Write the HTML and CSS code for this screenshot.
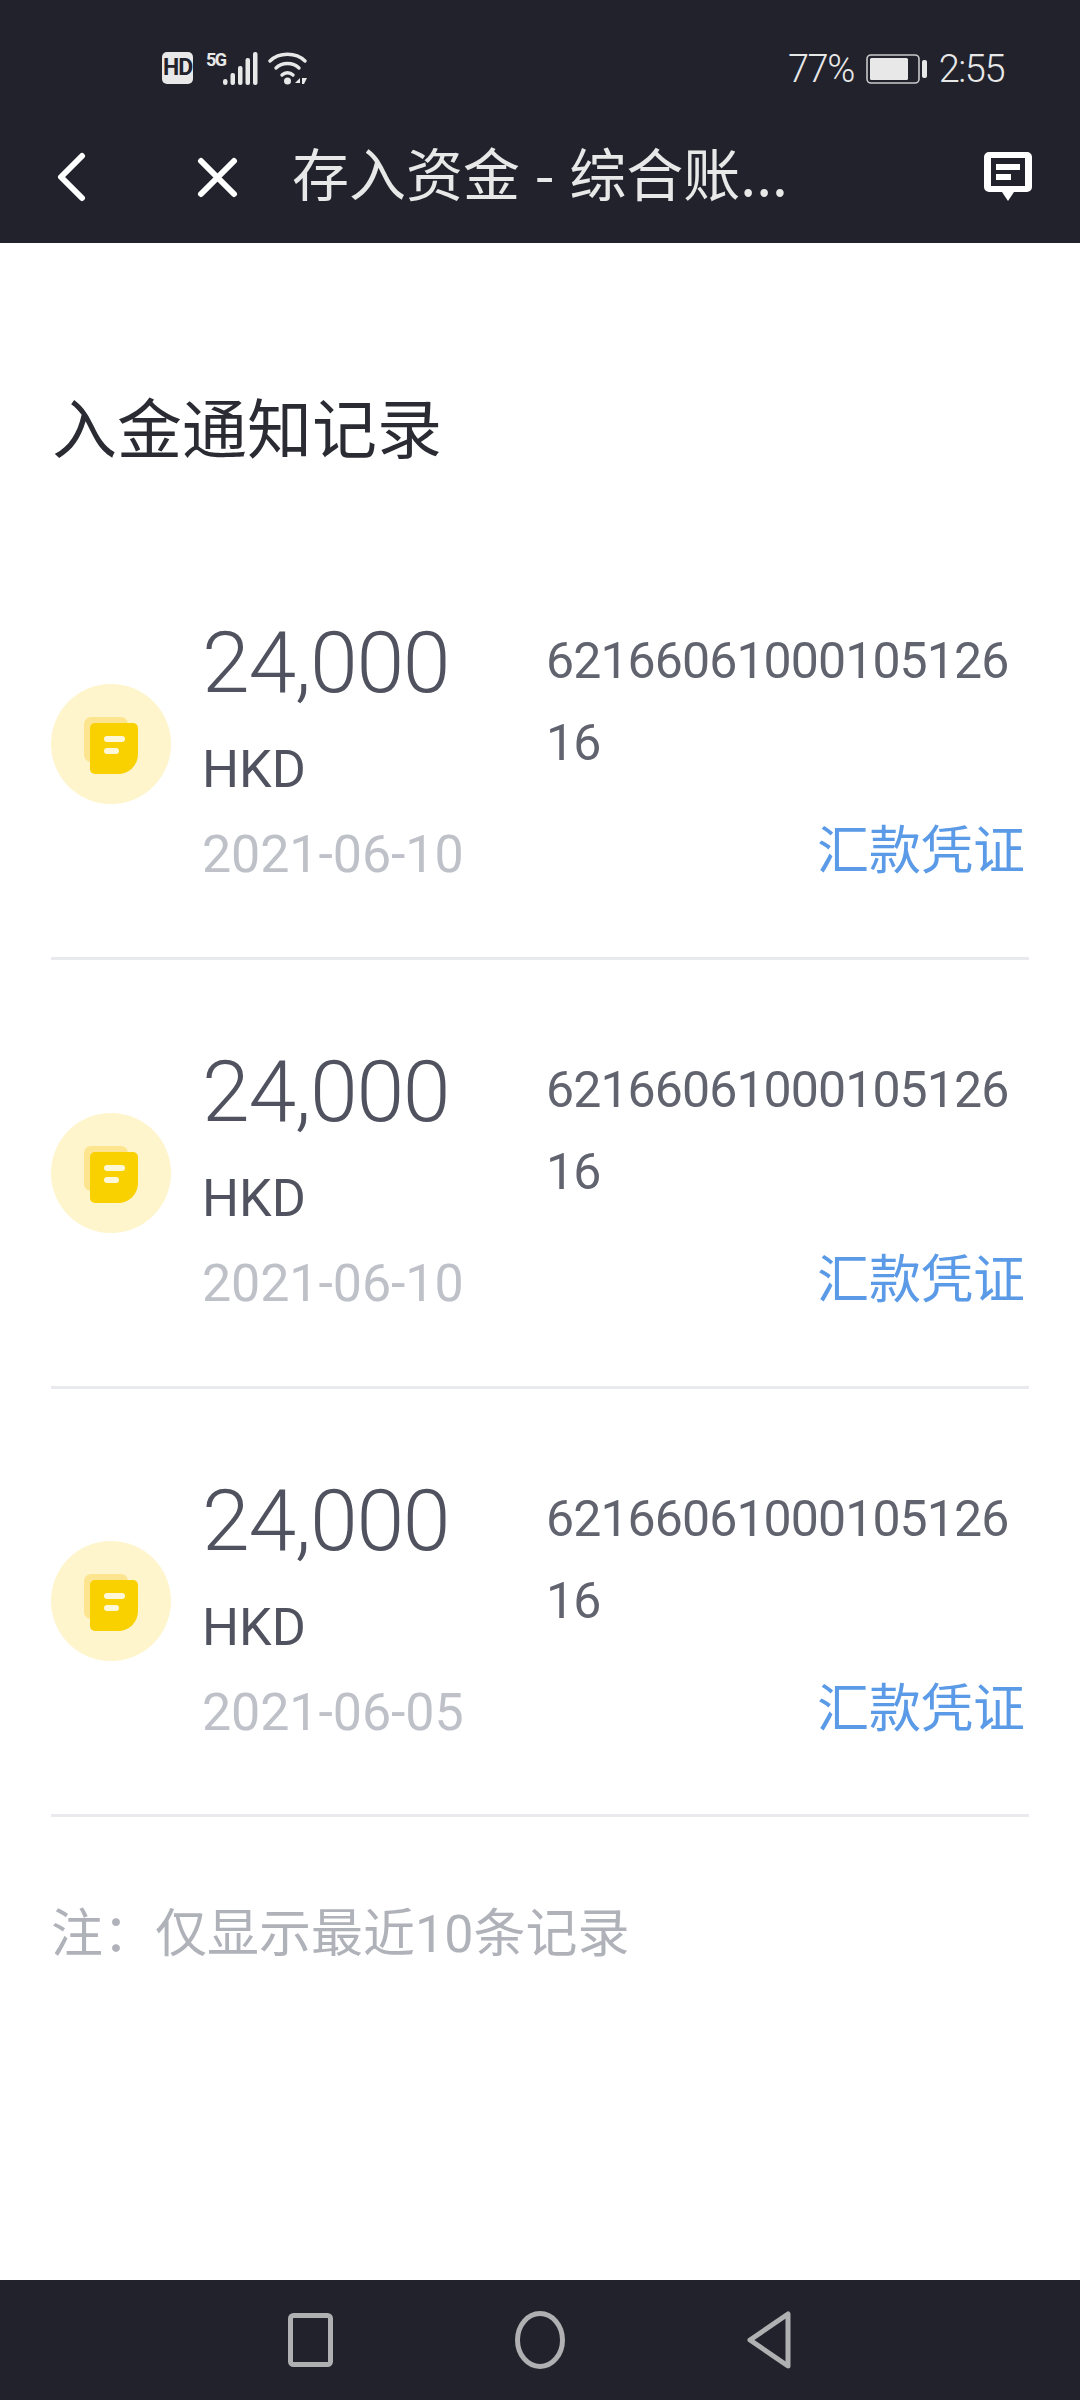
FILE: index.html
```html
<!DOCTYPE html>
<html lang="zh-CN">
<head>
    <meta charset="UTF-8">
    <meta name="viewport" content="width=device-width, initial-scale=1.0">
    <title>入金通知记录</title>
    <link rel="stylesheet" href="styles.css">
</head>
<body>
    <div class="page">
        <header class="top">
            <div class="status-bar">
                <div class="status-left">
                    <span class="hd">HD</span>
                    <span class="five-g">5G</span>
                    <svg class="signal" width="35" height="33" viewBox="0 0 35 33" fill="#e8e8e8">
                        <rect x="0" y="27" width="4.500" height="6" rx="2.250"/>
                        <rect x="7.500" y="21" width="4.500" height="12" rx="2"/>
                        <rect x="15" y="14" width="4.500" height="19" rx="2"/>
                        <rect x="22.500" y="6" width="4.500" height="27" rx="2"/>
                        <rect x="30" y="0" width="4.500" height="33" rx="2"/>
                    </svg>
                    <svg class="wifi" width="39" height="33" viewBox="0 0 39 33" fill="none" stroke="#e8e8e8" stroke-width="3.400" stroke-linecap="round">
                        <path d="M2 9C11 0 28 0 37 9"/>
                        <path d="M8 16C14 10 25 10 31 16"/>
                        <path d="M14 23C17 20 22 20 25 23"/>
                        <circle cx="19.500" cy="29" r="3.500" fill="#e8e8e8" stroke="none"/>
                        <path d="M32 26L27 31H32Z" fill="#e8e8e8" stroke="none"/>
                        <path d="M34 26H39L36 32H34Z" fill="#e8e8e8" stroke="none"/>
                    </svg>
                </div>
                <div class="status-right">
                    <span>77%</span>
                    <svg class="battery" width="61" height="30" viewBox="0 0 61 30">
                        <rect x="1" y="1" width="52" height="28" rx="4" fill="none" stroke="#c9c9cb" stroke-width="1.600"/>
                        <rect x="4" y="4" width="38" height="22" rx="1.500" fill="#e8e8e8"/>
                        <rect x="56" y="6" width="5" height="18" rx="2" fill="#e8e8e8"/>
                    </svg>
                    <span>2:55</span>
                </div>
            </div>
            <nav class="nav-bar">
                <svg class="back" width="30" height="50" viewBox="0 0 30 50" fill="none" stroke="#fff" stroke-width="6" stroke-linecap="round" stroke-linejoin="round">
                    <path d="M25 4L4 25L25 46"/>
                </svg>
                <svg class="close" width="42" height="42" viewBox="0 0 42 42" fill="none" stroke="#fff" stroke-width="6" stroke-linecap="round">
                    <path d="M4 5L37 38M37 5L4 38"/>
                </svg>
                <div class="nav-title">存入资金 - 综合账...</div>
                <svg class="comment" width="48" height="50" viewBox="0 0 48 50">
                    <path fill="#fff" fill-rule="evenodd" d="M5 0H43A5 5 0 0 1 48 5V35A5 5 0 0 1 43 40H30L24 49L18 40H5A5 5 0 0 1 0 35V5A5 5 0 0 1 5 0ZM7 6V34H41V6ZM12 12H36V18H12ZM12 22H27V28H12Z"/>
                </svg>
            </nav>
        </header>

        <main class="content">
            <h1 class="heading">入金通知记录</h1>

            <div class="record">
                <div class="record-icon">
                    <svg width="54" height="57" viewBox="0 0 54 57">
                        <rect x="0" y="0" width="44" height="45" rx="7" fill="#fde590"/>
                        <path fill="#f9d000" d="M11 6H49A5 5 0 0 1 54 11V37A20 20 0 0 1 34 57H11A5 5 0 0 1 6 52V11A5 5 0 0 1 11 6Z"/>
                        <rect x="20" y="19" width="21" height="6" rx="3" fill="#fff8d8"/>
                        <rect x="20" y="31" width="15" height="6" rx="3" fill="#fff8d8"/>
                    </svg>
                </div>
                <div class="record-main">
                    <div class="amount">24,000</div>
                    <div class="currency">HKD</div>
                    <div class="date">2021-06-10</div>
                </div>
                <div class="record-side">
                    <div class="account">6216606100010512616</div>
                    <a class="voucher">汇款凭证</a>
                </div>
            </div>

            <div class="record">
                <div class="record-icon">
                    <svg width="54" height="57" viewBox="0 0 54 57">
                        <rect x="0" y="0" width="44" height="45" rx="7" fill="#fde590"/>
                        <path fill="#f9d000" d="M11 6H49A5 5 0 0 1 54 11V37A20 20 0 0 1 34 57H11A5 5 0 0 1 6 52V11A5 5 0 0 1 11 6Z"/>
                        <rect x="20" y="19" width="21" height="6" rx="3" fill="#fff8d8"/>
                        <rect x="20" y="31" width="15" height="6" rx="3" fill="#fff8d8"/>
                    </svg>
                </div>
                <div class="record-main">
                    <div class="amount">24,000</div>
                    <div class="currency">HKD</div>
                    <div class="date">2021-06-10</div>
                </div>
                <div class="record-side">
                    <div class="account">6216606100010512616</div>
                    <a class="voucher">汇款凭证</a>
                </div>
            </div>

            <div class="record">
                <div class="record-icon">
                    <svg width="54" height="57" viewBox="0 0 54 57">
                        <rect x="0" y="0" width="44" height="45" rx="7" fill="#fde590"/>
                        <path fill="#f9d000" d="M11 6H49A5 5 0 0 1 54 11V37A20 20 0 0 1 34 57H11A5 5 0 0 1 6 52V11A5 5 0 0 1 11 6Z"/>
                        <rect x="20" y="19" width="21" height="6" rx="3" fill="#fff8d8"/>
                        <rect x="20" y="31" width="15" height="6" rx="3" fill="#fff8d8"/>
                    </svg>
                </div>
                <div class="record-main">
                    <div class="amount">24,000</div>
                    <div class="currency">HKD</div>
                    <div class="date">2021-06-05</div>
                </div>
                <div class="record-side">
                    <div class="account">6216606100010512616</div>
                    <a class="voucher">汇款凭证</a>
                </div>
            </div>

            <p class="note">注：仅显示最近10条记录</p>
        </main>

        <footer class="system-bar">
            <svg width="45" height="54" viewBox="0 0 45 54" fill="none" stroke="#b0b0b2" stroke-width="5">
                <rect x="2.500" y="2.500" width="40" height="49" rx="3"/>
            </svg>
            <svg width="50" height="58" viewBox="0 0 50 58" fill="none" stroke="#b0b0b2" stroke-width="5">
                <ellipse cx="25" cy="29" rx="22.500" ry="26.500"/>
            </svg>
            <svg width="44" height="58" viewBox="0 0 44 58" fill="none" stroke="#b0b0b2" stroke-width="5" stroke-linejoin="round">
                <path d="M41 3V55L3 29Z"/>
            </svg>
        </footer>
    </div>
</body>
</html>
```

FILE: styles.css
```css
* {
    box-sizing: border-box;
}

body {
    margin: 0;
    font-family: Roboto, "Noto Sans CJK SC", sans-serif;
    background-color: #fff;
}

.page {
    display: flex;
    flex-direction: column;
    width: 1080px;
    height: 2400px;
    overflow: hidden;
}

.top {
    height: 243px;
    background-color: #21222c;
    color: #e8e8e8;
}

.status-bar {
    display: flex;
    justify-content: space-between;
    align-items: center;
    height: 68px;
    margin-top: 34px;
    padding: 0 76px 0 162px;
}

.status-left {
    display: flex;
    align-items: center;
}

.hd {
    width: 31px;
    height: 32px;
    border-radius: 5px;
    background-color: #e8e8e8;
    color: #21222c;
    font-size: 23px;
    font-weight: 700;
    line-height: 32px;
    text-align: center;
    letter-spacing: -1px;
}

.five-g {
    align-self: flex-start;
    width: 17px;
    margin-left: 13px;
    font-size: 18px;
    font-weight: 700;
    line-height: 15px;
    letter-spacing: -1.500px;
    white-space: nowrap;
}

.wifi {
    margin-left: 10px;
}

.status-right {
    display: flex;
    align-items: center;
    gap: 12px;
    padding-top: 2px;
    font-size: 38px;
    font-weight: 300;
    letter-spacing: -1.500px;
}

.nav-bar {
    display: flex;
    align-items: center;
    height: 141px;
    padding: 8px 48px 0 57px;
}

.close {
    margin-left: 110px;
}

.nav-title {
    flex: 1;
    margin: 0 0 12px 53px;
    font-family: "Noto Sans CJK SC", sans-serif;
    font-size: 57px;
    line-height: 70px;
    word-spacing: 2px;
    white-space: nowrap;
}

.content {
    flex: 1;
    padding: 0 51px;
}

.heading {
    margin: 0;
    padding: 142px 0 66px 1px;
    font-family: "Noto Sans CJK SC", sans-serif;
    font-size: 65px;
    font-weight: 400;
    line-height: 80px;
    color: #2a2b33;
}

.record {
    display: flex;
    align-items: flex-start;
    height: 428.800px;
    border-bottom: 3px solid #e9eaee;
}

.record-icon {
    display: flex;
    justify-content: center;
    align-items: center;
    align-self: center;
    flex-shrink: 0;
    width: 120px;
    height: 120px;
    margin-right: 32px;
    padding-top: 3px;
    border-radius: 50%;
    background-color: #fef5cc;
}

.record-main {
    width: 344px;
    margin-left: -1px;
    padding-top: 80px;
}

.amount {
    font-size: 86px;
    font-weight: 300;
    line-height: 104px;
    letter-spacing: -1.300px;
    color: #50535f;
}

.currency {
    margin-top: 21px;
    font-size: 52px;
    font-weight: 400;
    line-height: 68px;
    color: #50535f;
}

.date {
    margin-top: 17px;
    font-size: 52px;
    font-weight: 400;
    line-height: 68px;
    letter-spacing: -0.100px;
    color: #bfc1c9;
}

.record-side {
    width: 482px;
    padding-top: 89px;
}

.account {
    font-size: 50px;
    font-weight: 400;
    line-height: 82px;
    letter-spacing: -0.900px;
    word-break: break-all;
    color: #61646f;
}

.voucher {
    display: block;
    margin-top: 28px;
    padding-right: 3px;
    font-family: "Noto Sans CJK SC", sans-serif;
    font-size: 52px;
    line-height: 70px;
    text-align: right;
    color: #5a9ae6;
}

.note {
    margin: 83px 0 0;
    font-family: Roboto, "Noto Sans CJK SC", sans-serif;
    font-size: 52px;
    line-height: 70px;
    color: #b0b2b9;
}

.system-bar {
    display: flex;
    justify-content: center;
    align-items: center;
    gap: 182px;
    height: 120px;
    padding-right: 2px;
    background-color: #21222c;
}
```
